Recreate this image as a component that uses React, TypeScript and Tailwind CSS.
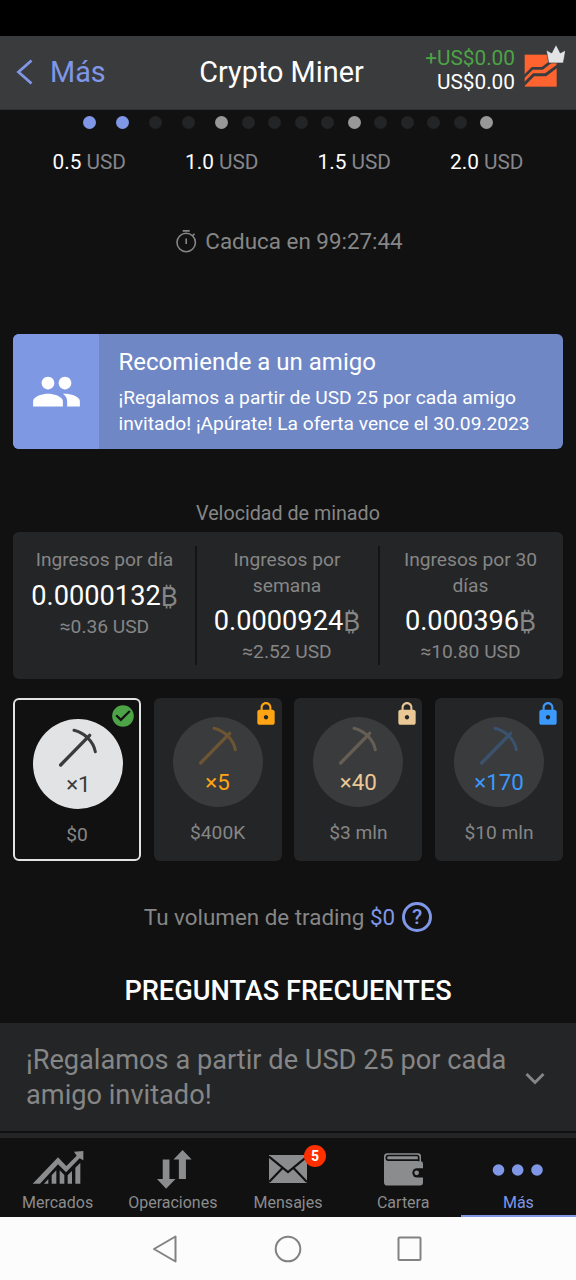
import React from 'react';
import { MdCheckCircle, MdLock, MdPeople } from 'react-icons/md';

type DotState = 'done' | 'idle' | 'stop';

const dotColors: Record<DotState, string> = {
  done: 'bg-[#7f97e6]',
  idle: 'bg-[#232425]',
  stop: 'bg-[#989898]',
};

const firstDots: DotState[] = ['done', 'done', 'idle', 'idle'];
const restDots: DotState[] = [
  'stop', 'idle', 'idle', 'idle', 'idle',
  'stop', 'idle', 'idle', 'idle', 'idle',
  'stop',
];

const rewards = ['0.5', '1.0', '1.5', '2.0'];

const incomes = [
  { label: 'Ingresos por día', value: '0.0000132', usd: '≈0.36 USD' },
  { label: 'Ingresos por semana', value: '0.0000924', usd: '≈2.52 USD' },
  { label: 'Ingresos por 30 días', value: '0.000396', usd: '≈10.80 USD' },
];

const levels = [
  { multiplier: '×1', price: '$0', active: true, color: 'text-[#3a3b3d]' },
  { multiplier: '×5', price: '$400K', active: false, color: 'text-[#ffa514]' },
  { multiplier: '×40', price: '$3 mln', active: false, color: 'text-[#e9c896]' },
  { multiplier: '×170', price: '$10 mln', active: false, color: 'text-[#3b99fc]' },
];

const Dot: React.FC<{ state: DotState }> = ({ state }) => (
  <span className={`size-[13px] rounded-full ${dotColors[state]}`} />
);

const BrandLogo = () => (
  <svg width="44" height="46" viewBox="0 0 132 138">
    <rect x="11" y="32" width="96" height="96" fill="#ff6430" />
    <path d="M6 101 L34 73 H64 L94 50" fill="none" stroke="#3a3b3d" strokeWidth="8" />
    <path d="M6 124 L38 92 H74 L112 64" fill="none" stroke="#3a3b3d" strokeWidth="9" />
    <path
      d="M83 57 L76 18 L92 27 L105 2 L118 27 L134 18 L127 57 Z"
      fill="#e2e3e5"
      stroke="#3a3b3d"
      strokeWidth="2"
    />
  </svg>
);

const Pickaxe: React.FC<{ className?: string }> = ({ className }) => (
  <svg
    width="40"
    height="40"
    viewBox="0 0 120 120"
    fill="none"
    stroke="currentColor"
    strokeLinecap="round"
    className={className}
  >
    <path d="M8 114 L95 25" strokeWidth="10" />
    <path d="M48 10 C78 17 106 42 112 74" strokeWidth="9" />
  </svg>
);

const TimerIcon = () => (
  <svg width="22" height="24" viewBox="0 0 22 24" fill="none" stroke="currentColor" strokeWidth="1.6">
    <circle cx="11.2" cy="12.5" r="9.2" />
    <path d="M7.7 0.9 H14.7 M11.2 8.5 V14 M17.7 5.6 L19.5 3.8" />
  </svg>
);

const MarketsIcon = () => (
  <svg width="52" height="34" viewBox="95 70 156 102" fill="currentColor" className="-mt-[5px]">
    <path d="M97 171 L173 92 L198 118 L229 87 L221 75 L249 73 V101 L238 95 L197 137 L173 113 L119 171 Z" />
    <path d="M131 171 L144 157 V171 Z M154 171 V146 L168 131 V171 Z M178 171 V131 L192 145 V171 Z M202 171 V146 L215 133 V171 Z M225 171 V123 L240 108 V171 Z" />
  </svg>
);

const TradesIcon = () => (
  <svg width="35" height="39" viewBox="472 74 104 116" fill="currentColor" className="ml-1">
    <path d="M489 102 H509 V160 H527 L499 189 L472 160 H489 Z" />
    <path d="M548 74 L575 102 H558 V160 H537 V102 H521 Z" />
  </svg>
);

const MailIcon = () => (
  <svg width="38" height="28" viewBox="0 0 38 28">
    <rect width="38" height="28" fill="currentColor" />
    <path
      d="M0 1.5 L19 17 L38 1.5 M0 27 L13.5 13 M38 27 L24.5 13"
      fill="none"
      stroke="#111111"
      strokeWidth="2.2"
    />
  </svg>
);

const WalletIcon = () => (
  <svg width="39" height="33" viewBox="0 0 117 98">
    <path
      d="M10 0 H102 Q111 0 111 9 V24 Q117 25 117 32 V88 Q117 97 108 97 H10 Q0 97 0 87 V10 Q0 0 10 0 Z"
      fill="currentColor"
    />
    <path
      d="M104 24 V12 Q104 7 99 7 H13 Q7 7 7 14 Q7 21 13 21 H104"
      fill="none"
      stroke="#111111"
      strokeWidth="5"
    />
    <path d="M118 45 H99 A14 14 0 0 0 99 73 H118 Z" fill="#111111" />
    <circle cx="98" cy="59" r="7" fill="currentColor" />
  </svg>
);

const MoreIcon = () => (
  <svg width="52" height="12" viewBox="0 0 52 12" fill="currentColor" className="mt-px">
    <circle cx="6.5" cy="6" r="5.8" />
    <circle cx="25.7" cy="6" r="5.8" />
    <circle cx="45" cy="6" r="5.8" />
  </svg>
);

const tabs = [
  { label: 'Mercados', icon: <MarketsIcon />, active: false },
  { label: 'Operaciones', icon: <TradesIcon />, active: false },
  { label: 'Mensajes', icon: <MailIcon />, active: false, badge: 5 },
  { label: 'Cartera', icon: <WalletIcon />, active: false },
  { label: 'Más', icon: <MoreIcon />, active: true },
];

const Header = () => (
  <header className="h-[74px] bg-[#3a3b3d] border-b border-[#303133] grid grid-cols-[180px_1fr_180px] items-center">
    <button className="flex items-center text-left text-[#7f97e6] pl-[16px]">
      <svg width="18" height="28" viewBox="0 0 18 28" fill="none" stroke="currentColor" strokeWidth="2.8">
        <path d="M15.5 2.5 L2.5 14 L15.5 25.5" />
      </svg>
      <span className="ml-4 text-[28.8px] leading-none">Más</span>
    </button>
    <h1 className="text-center text-[28.8px] leading-none whitespace-nowrap -ml-[13px]">Crypto Miner</h1>
    <div className="flex justify-end items-start -mt-2">
      <div className="text-right text-[20.8px] leading-6 pt-[3px]">
        <p className="text-[#4ca446]">+US$0.00</p>
        <p>US$0.00</p>
      </div>
      <div className="w-[61px] pl-[6px] pt-px shrink-0">
        <BrandLogo />
      </div>
    </div>
  </header>
);

const Progress = () => (
  <section className="pt-[6px]">
    <div className="flex pl-[83px]">
      <div className="flex gap-5 mr-5">
        {firstDots.map((state, i) => (
          <Dot key={i} state={state} />
        ))}
      </div>
      <div className="flex gap-[13.5px]">
        {restDots.map((state, i) => (
          <Dot key={i} state={state} />
        ))}
      </div>
    </div>
    <div className="grid grid-cols-4 px-[23px] mt-[21px] text-[20.8px] leading-6 text-center">
      {rewards.map((amount) => (
        <p key={amount}>
          {amount} <span className="text-[#85868c]">USD</span>
        </p>
      ))}
    </div>
    <div className="mt-14 h-6 pl-[2px] flex items-center justify-center gap-2 text-[22.4px] text-[#868686]">
      <TimerIcon />
      <span>Caduca en 99:27:44</span>
    </div>
  </section>
);

const InviteBanner = () => (
  <section className="mx-[13px] mt-[80px] h-[115px] flex rounded-md overflow-hidden bg-[#6f87c5]">
    <div className="w-[86px] flex items-center justify-center bg-[#7f98e4]">
      <MdPeople size={51} />
    </div>
    <div className="pl-[19.5px] pt-[11.5px]">
      <h2 className="text-[24px] leading-8">Recomiende a un amigo</h2>
      <p className="mt-[7px] text-[19.2px] leading-[26px]">
        ¡Regalamos a partir de USD 25 por cada amigo
        <br />
        invitado! ¡Apúrate! La oferta vence el 30.09.2023
      </p>
    </div>
  </section>
);

const MiningSpeed = () => (
  <section className="px-[13px] pt-[53px]">
    <h3 className="text-center text-[19.7px] leading-6 text-[#868686]">Velocidad de minado</h3>
    <div className="mt-[6px] h-[147px] py-[14px] grid grid-cols-[183px_183px_184px] rounded-md bg-[#242527]">
      {incomes.map((income, i) => (
        <div
          key={income.label}
          className={`px-5 text-center text-[19.2px] leading-[25.6px] text-[#868686] ${
            i > 0 ? '-ml-px pr-[22px] border-l-2 border-[#141415]' : ''
          }`}
        >
          <p className="pt-px -mb-px">{income.label}</p>
          <p className="h-12 pt-[2px] flex items-center justify-center text-[27.2px] text-white">
            {income.value}
            <span className="w-[17px] text-[26px] text-[#868686] font-[Inter]">₿</span>
          </p>
          <p className="-mt-[6px]">{income.usd}</p>
        </div>
      ))}
    </div>
  </section>
);

const Levels = () => (
  <section className="mx-[13px] mt-[19px] grid grid-cols-4 gap-[12.8px]">
    {levels.map((level) => (
      <div
        key={level.multiplier}
        className={`relative h-[163px] rounded-md flex flex-col items-center pt-[19px] ${
          level.active ? 'border-2 border-[#e2e3e5]' : 'bg-[#242527]'
        }`}
      >
        <span className={`absolute top-[3px] right-[2.5px] ${level.active ? 'text-[#4ca446]' : level.color}`}>
          {level.active ? <MdCheckCircle size={26} /> : <MdLock size={26} />}
        </span>
        <div
          className={`size-[90px] rounded-full pt-2 flex flex-col items-center ${
            level.active ? 'bg-[#e2e3e5] ml-[3px]' : 'bg-[#3a3b3d]'
          }`}
        >
          <Pickaxe className={`${level.color} ${level.active ? '' : 'opacity-25'}`} />
          <span className={`mt-[5px] text-[22.4px] leading-6 ${level.color}`}>{level.multiplier}</span>
        </div>
        <p className="mt-[14px] text-[19.2px] leading-6 text-[#868686]">{level.price}</p>
      </div>
    ))}
  </section>
);

const Volume = () => (
  <div className="mt-[41px] h-[30px] flex items-center justify-center text-[22.4px] text-[#868686]">
    <span className="pt-px">
      Tu volumen de trading <span className="text-[#7f97e6]">$0</span>
    </span>
    <span className="ml-[7px] size-[30px] rounded-full border-[3px] border-[#7f97e6] text-[#7f97e6] text-[21px] font-medium leading-none flex items-center justify-center">
      ?
    </span>
  </div>
);

const Faq = () => (
  <section className="mt-[43px]">
    <h2 className="text-center text-[27.2px] leading-8 font-medium">PREGUNTAS FRECUENTES</h2>
    <div className="mt-4 h-[108px] pt-[2px] px-[26px] bg-[#242527] text-[#868686] flex items-center justify-between">
      <p className="text-[27.2px] leading-[35px]">
        ¡Regalamos a partir de USD 25 por cada
        <br />
        amigo invitado!
      </p>
      <svg width="20" height="14" viewBox="0 0 20 14" fill="none" stroke="currentColor" strokeWidth="3" className="mr-[5px] mt-px shrink-0">
        <path d="M1.5 2 L10 10.5 L18.5 2" />
      </svg>
    </div>
    <div className="mt-[2px] h-[5px] bg-[#242527]" />
  </section>
);

const TabBar = () => (
  <nav className="h-[79px] grid grid-cols-5">
    {tabs.map((tab) => (
      <button
        key={tab.label}
        className={`flex flex-col items-center text-[16px] border-b-2 ${
          tab.active ? 'text-[#7f97e6] border-[#7f97e6]' : 'text-[#8b8c8e] border-transparent'
        }`}
      >
        <span className="relative h-[62px] -mb-2 flex items-center">
          {tab.icon}
          {tab.badge && (
            <span className="absolute left-[35px] top-[7px] size-[22px] rounded-full bg-[#ff3000] text-white text-[14px] font-bold leading-none flex items-center justify-center">
              {tab.badge}
            </span>
          )}
        </span>
        <span className="leading-[22px]">{tab.label}</span>
      </button>
    ))}
  </nav>
);

const SystemNav = () => (
  <div className="h-[63px] bg-[#fcfcfc] flex items-center justify-center text-[#828282]">
    <svg width="270" height="28" viewBox="-5 0 270 28" fill="none" stroke="currentColor" strokeWidth="2" strokeLinejoin="round">
      <path d="M-4 14 L17.5 1.5 V26.5 Z" />
      <circle cx="130" cy="14" r="12.3" />
      <rect x="240.5" y="2.5" width="22" height="22.5" rx="1" />
    </svg>
  </div>
);

const App = () => (
  <div
    className="w-[576px] h-[1280px] overflow-hidden flex flex-col bg-[#111111] text-white"
    style={{ fontFamily: 'Roboto, "DejaVu Sans", sans-serif' }}
  >
    <div className="h-9 bg-black" />
    <Header />
    <main className="flex-1">
      <Progress />
      <InviteBanner />
      <MiningSpeed />
      <Levels />
      <Volume />
      <Faq />
    </main>
    <TabBar />
    <SystemNav />
  </div>
);

export default App;
